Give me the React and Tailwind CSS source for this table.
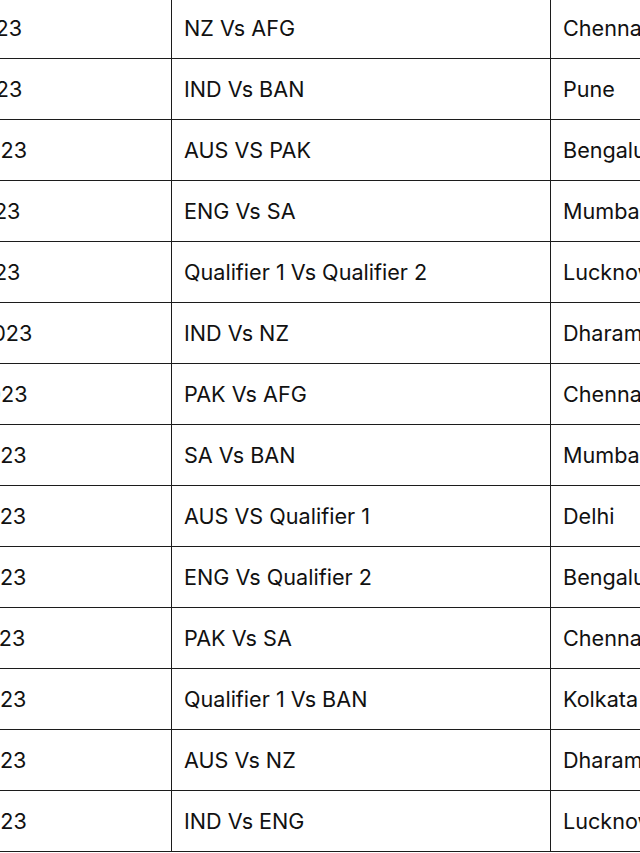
import React from 'react';

const matches = [
  { date: '18th October 2023', teams: 'NZ Vs AFG', venue: 'Chennai' },
  { date: '19th October 2023', teams: 'IND Vs BAN', venue: 'Pune' },
  { date: '20th October 2023', teams: 'AUS VS PAK', venue: 'Bengaluru' },
  { date: '21st October 2023', teams: 'ENG Vs SA', venue: 'Mumbai' },
  { date: '21st October 2023', teams: 'Qualifier 1 Vs Qualifier 2', venue: 'Lucknow' },
  { date: '22nd October 2023', teams: 'IND Vs NZ', venue: 'Dharamsala' },
  { date: '23rd October 2023', teams: 'PAK Vs AFG', venue: 'Chennai' },
  { date: '24th October 2023', teams: 'SA Vs BAN', venue: 'Mumbai' },
  { date: '25th October 2023', teams: 'AUS VS Qualifier 1', venue: 'Delhi' },
  { date: '26th October 2023', teams: 'ENG Vs Qualifier 2', venue: 'Bengaluru' },
  { date: '27th October 2023', teams: 'PAK Vs SA', venue: 'Chennai' },
  { date: '28th October 2023', teams: 'Qualifier 1 Vs BAN', venue: 'Kolkata' },
  { date: '28th October 2023', teams: 'AUS Vs NZ', venue: 'Dharamsala' },
  { date: '29th October 2023', teams: 'IND Vs ENG', venue: 'Lucknow' },
];

export default function App() {
  return (
    <div className="w-[640px] h-[853px] overflow-hidden bg-white font-['Inter',sans-serif] text-[21.6px] text-[#111]">
      <table className="table-fixed border-collapse -mt-[3px] -ml-[181px] w-[1031px]">
        <colgroup>
          <col className="w-[352px]" />
          <col className="w-[379px]" />
          <col className="w-[300px]" />
        </colgroup>
        <tbody>
          {matches.map((m, i) => (
            <tr key={i} className="h-[61px]">
              <td className="border border-[#1c1c1c] px-3 whitespace-nowrap">{m.date}</td>
              <td className="border border-[#1c1c1c] px-3 whitespace-nowrap">{m.teams}</td>
              <td className="border border-[#1c1c1c] px-3 whitespace-nowrap overflow-hidden">{m.venue}</td>
            </tr>
          ))}
        </tbody>
      </table>
    </div>
  );
}
